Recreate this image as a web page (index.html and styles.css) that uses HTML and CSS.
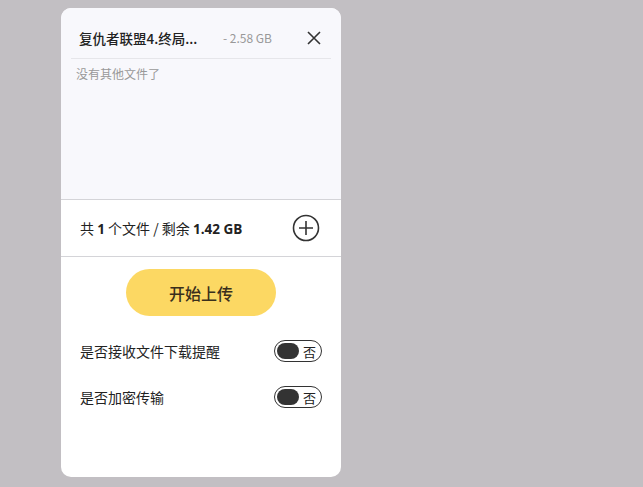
FILE: index.html
```html
<!DOCTYPE html>
<html lang="zh-CN">
<head>
    <meta charset="UTF-8">
    <title>上传文件</title>
    <link rel="stylesheet" href="styles.css">
</head>
<body>
    <div class="upload-panel">
        <div class="file-list">
            <div class="file-item">
                <span class="file-name">复仇者联盟4.终局...</span>
                <span class="file-size">- 2.58 GB</span>
                <svg class="close-icon" width="14" height="14" viewBox="0 0 14 14">
                    <path d="M1 1 L13 13 M13 1 L1 13" stroke="#333" stroke-width="1.6" fill="none"/>
                </svg>
            </div>
            <p class="file-empty">没有其他文件了</p>
        </div>

        <div class="summary">
            <span>共 <b>1</b> 个文件 / 剩余 <b>1.42 GB</b></span>
            <svg class="add-icon" width="28" height="28" viewBox="0 0 28 28">
                <circle cx="14" cy="14" r="12.5" stroke="#333" stroke-width="1.6" fill="none"/>
                <path d="M14 7 V21 M7 14 H21" stroke="#333" stroke-width="1.6"/>
            </svg>
        </div>

        <div class="actions">
            <button class="start-btn">开始上传</button>
            <div class="option-row">
                <span>是否接收文件下载提醒</span>
                <span class="toggle"><span class="knob"></span>否</span>
            </div>
            <div class="option-row">
                <span>是否加密传输</span>
                <span class="toggle"><span class="knob"></span>否</span>
            </div>
        </div>
    </div>
</body>
</html>
```

FILE: styles.css
```css
* {
    margin: 0;
    padding: 0;
    box-sizing: border-box;
}
body {
    font-family: "Noto Sans CJK SC", "Noto Sans", sans-serif;
    background: #c2bfc3;
    color: #222;
    min-height: 100vh;
    padding: 8px 0 0 61px;
}
.upload-panel {
    width: 280px;
    height: 469px;
    background: #fff;
    border-radius: 10px;
    overflow: hidden;
    display: flex;
    flex-direction: column;
}
.file-list {
    height: 192px;
    background: #f8f8fc;
    border-bottom: 1px solid #d4d4d8;
    padding: 0 10px;
}
.file-item {
    height: 51px;
    display: flex;
    align-items: center;
    padding: 9px 10px 0 8px;
    border-bottom: 1px solid #e6e6ea;
}
.file-name {
    font-size: 13.5px;
    font-weight: 500;
    color: #222;
    width: 144px;
}
.file-size {
    font-size: 12px;
    color: #999;
    flex: 1;
}
.file-empty {
    font-size: 12px;
    color: #999;
    padding: 6px 5px;
}
.summary {
    height: 57px;
    border-bottom: 1px solid #d4d4d8;
    display: flex;
    align-items: center;
    justify-content: space-between;
    padding: 0 21px 0 19px;
    font-size: 14px;
}
.summary b {
    font-family: "Open Sans", sans-serif;
    font-weight: 700;
    font-size: 13.5px;
}
.actions {
    flex: 1;
    display: flex;
    flex-direction: column;
    padding: 12px 19px 0 19px;
}
.start-btn {
    align-self: center;
    width: 150px;
    height: 47px;
    border: none;
    border-radius: 24px;
    background: #fcd863;
    color: #3a2f1c;
    font-family: inherit;
    font-size: 16px;
    font-weight: 500;
    margin-bottom: 12px;
}
.option-row {
    height: 46px;
    display: flex;
    align-items: center;
    justify-content: space-between;
    font-size: 14px;
    color: #222;
}
.toggle {
    width: 48px;
    height: 22px;
    border: 1px solid #333;
    border-radius: 11px;
    display: flex;
    align-items: center;
    gap: 4px;
    padding: 0 2px;
    font-size: 13px;
    line-height: 1;
}
.knob {
    width: 22px;
    height: 16px;
    border-radius: 8px;
    background: #333;
    flex-shrink: 0;
}
```
